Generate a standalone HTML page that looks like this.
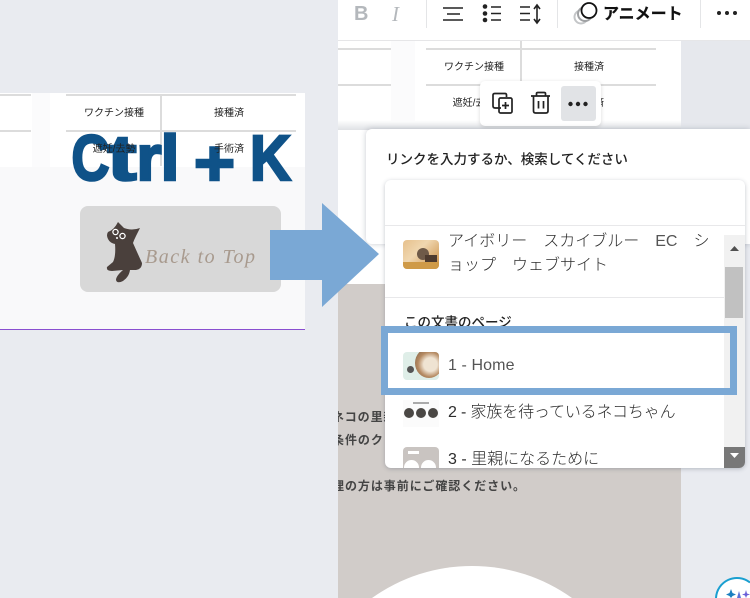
<!DOCTYPE html>
<html lang="ja">
<head>
<meta charset="utf-8">
<style>
html,body{margin:0;padding:0;width:750px;height:598px;overflow:hidden}
body{position:relative;background:#e9ebf0;font-family:"Liberation Sans","Noto Sans CJK JP",sans-serif;color:#222}
.a{position:absolute;white-space:nowrap}
.t{font-size:10px;line-height:14px;color:#222;transform:translateX(-50%)}
.l{background:#dcdcdc}
.dt{font-size:16px;line-height:24px;color:#2c2c2c;font-weight:300}
.p{font-size:12px;line-height:17px;font-weight:700;color:#444;letter-spacing:.95px}
</style>
</head>
<body>
<!-- left panel -->
<div class="a" style="left:0;top:93px;width:305px;height:236px;background:#f9f9fa"></div>
<div class="a" style="left:0;top:93px;width:305px;height:74px;background:#fff"></div>
<div class="a" style="left:32px;top:93px;width:18px;height:74px;background:#fbfbfc"></div>
<div class="a" style="left:0;top:329px;width:305px;height:1px;background:#8a4fd0"></div>
<div class="a l" style="left:0;top:94px;width:31px;height:2px"></div>
<div class="a l" style="left:0;top:130px;width:31px;height:2px"></div>
<div class="a l" style="left:66px;top:94px;width:230px;height:2px"></div>
<div class="a l" style="left:66px;top:130px;width:230px;height:2px"></div>
<div class="a l" style="left:160px;top:94px;width:2px;height:72px"></div>
<svg class="a" style="left:0;top:100px" width="305" height="95" viewBox="0 100 305 95" fill="#0f5288" stroke="#0f5288" stroke-width="2.500" font-family="Liberation Sans,sans-serif" font-weight="700" font-size="64">
  <text x="71.500" y="180" textLength="38" lengthAdjust="spacingAndGlyphs">C</text>
  <text x="107.500" y="180" textLength="29" lengthAdjust="spacingAndGlyphs">t</text>
  <text x="136.500" y="180" textLength="25" lengthAdjust="spacingAndGlyphs">r</text>
  <text x="160.500" y="180" textLength="19" lengthAdjust="spacingAndGlyphs">l</text>
  <text x="194" y="185" textLength="41" lengthAdjust="spacingAndGlyphs">+</text>
  <text x="250" y="180" textLength="41" lengthAdjust="spacingAndGlyphs">K</text>
</svg>
<div class="a t" style="left:114px;top:107px">ワクチン接種</div>
<div class="a t" style="left:229px;top:107px">接種済</div>
<div class="a t" style="left:114px;top:143px">遮妊/去勢</div>
<div class="a t" style="left:229px;top:143px">手術済</div>
<div class="a" style="left:80px;top:206px;width:201px;height:86px;background:#d8d8d8;border-radius:8px"></div>

<!-- right canvas -->
<div class="a" style="left:338px;top:0;width:412px;height:40px;background:#fff"></div>
<div class="a" style="left:338px;top:40px;width:412px;height:1px;background:#e6e6e8"></div>
<div class="a" style="left:338px;top:41px;width:343px;height:243px;background:#fff"></div>
<svg class="a" style="left:338px;top:284px" width="343" height="314" viewBox="338 284 343 314">
  <rect x="338" y="284" width="343" height="314" fill="#d1ccc9"/>
  <path d="M372 598A172 172 0 0 1 572 598Z" fill="#fff"/>
</svg>
<div class="a" style="left:338px;top:120px;width:343px;height:10px;background:linear-gradient(#fff0,#dfe1e5)"></div>
<div class="a" style="left:681px;top:41px;width:69px;height:88px;background:#e6e8ed"></div>
<div class="a" style="left:391px;top:41px;width:24px;height:80px;background:#fbfbfc"></div>
<div class="a l" style="left:338px;top:48px;width:53px;height:2px"></div>
<div class="a l" style="left:338px;top:84px;width:53px;height:2px"></div>
<div class="a l" style="left:426px;top:48px;width:230px;height:2px"></div>
<div class="a l" style="left:426px;top:84px;width:230px;height:2px"></div>
<div class="a l" style="left:520px;top:41px;width:2px;height:80px"></div>
<div class="a t" style="left:474px;top:61px">ワクチン接種</div>
<div class="a t" style="left:589px;top:61px">接種済</div>
<div class="a t" style="left:474px;top:97px">遮妊/去勢</div>
<div class="a t" style="left:589px;top:97px">手術済</div>

<!-- toolbar -->
<div class="a" style="left:354px;top:1px;font:bold 20px/26px 'Liberation Sans',sans-serif;color:#b4b8bc">B</div>
<div class="a" style="left:392px;top:1px;font:italic 21px/26px 'Liberation Serif',serif;color:#b4b8bc">I</div>
<div class="a" style="left:426px;top:0;width:1px;height:28px;background:#e4e5e7"></div>
<div class="a" style="left:557px;top:0;width:1px;height:28px;background:#e4e5e7"></div>
<div class="a" style="left:700px;top:0;width:1px;height:28px;background:#e4e5e7"></div>
<svg class="a" style="left:0;top:0" width="750" height="40" viewBox="0 0 750 40" fill="none" stroke="#222" stroke-width="1.600">
  <path d="M443 8H463M447 14H460M443 20H463"/>
  <circle cx="485" cy="6.500" r="2.300" fill="#222" stroke="none"/><circle cx="485" cy="13.500" r="2.300" fill="#222" stroke="none"/><circle cx="485" cy="20" r="2.300" fill="#222" stroke="none"/>
  <path d="M491 7H501M491 13.500H501M491 20H501"/>
  <path d="M520 7H530M520 13.500H530M520 20H530M537 6V22M534 9L537 5L540 9M534 19L537 23L540 19"/>
  <circle cx="581" cy="17" r="6.500" stroke="#c4c6c8" stroke-width="2"/>
  <circle cx="585" cy="14" r="7" stroke="#a0a2a4" stroke-width="2" fill="#fff"/>
  <circle cx="589" cy="10.500" r="7.500" stroke="#111" stroke-width="1.800" fill="#fff"/>
</svg>
<svg class="a" style="left:700px;top:0" width="50" height="40" viewBox="700 0 50 40">
  <circle cx="719" cy="13" r="2" fill="#222"/><circle cx="727" cy="13" r="2" fill="#222"/><circle cx="735" cy="13" r="2" fill="#222"/>
</svg>
<div class="a" style="left:603px;top:4px;font-size:16px;line-height:22px;font-weight:700;color:#111;-webkit-text-stroke:.2px #111">アニメート</div>

<!-- page text behind dialog -->
<div class="a p" style="left:332px;top:409px;clip-path:inset(0 0 0 6px)">ネコの里親</div>
<div class="a p" style="left:332px;top:432px;clip-path:inset(0 0 0 6px)">条件のク</div>
<div class="a p" style="left:332px;top:478px;clip-path:inset(0 0 0 6px)">理の方は事前にご確認ください。</div>

<!-- floating mini toolbar -->
<div class="a" style="left:480px;top:81px;width:121px;height:45px;background:#fff;border-radius:5px;box-shadow:0 1px 4px rgba(0,0,0,.15)"></div>
<div class="a" style="left:561px;top:86px;width:35px;height:35px;background:#e1e3e6;border-radius:3px"></div>
<svg class="a" style="left:480px;top:81px" width="121" height="45" viewBox="0 0 121 45" fill="none" stroke="#222" stroke-width="1.700">
  <path d="M21 27H15Q13 27 13 25V14Q13 12.500 15 12.500H25Q26.500 12.500 26.500 14V16"/>
  <rect x="19" y="17" width="13" height="15" rx="1.500"/>
  <path d="M25.500 21V28M22 24.500H29"/>
  <path d="M51 15H70M56.500 15V12.500Q56.500 11.500 58 11.500H64Q65.500 11.500 65.500 12.500V15M53.500 15V30Q53.500 32 55.500 32H66Q68 32 68 30V15M58.500 20V27.500M63.500 20V27.500"/>
  <circle cx="90.500" cy="23" r="2.200" fill="#222" stroke="none"/><circle cx="98" cy="23" r="2.200" fill="#222" stroke="none"/><circle cx="105.500" cy="23" r="2.200" fill="#222" stroke="none"/>
</svg>

<!-- assistant badge -->
<svg class="a" style="left:700px;top:565px" width="50" height="33" viewBox="0 0 50 33" fill="none">
  <path d="M16 33A21 21 0 0 1 50 17.500V33Z" fill="#fff"/>
  <path d="M16 33A21 21 0 0 1 50 17.500" stroke="#1a9fd0" stroke-width="2"/>
  <path d="M31 24L32.500 28L36 29.500L32.500 31L31 33L29.500 31L26 29.500L29.500 28Z" fill="#1a7fc0"/>
  <path d="M39 26L41 33H37Z" fill="#5a70d8"/>
  <path d="M46 25L47 28.500L50 29.500L47 30.500L46 33L45 30.500L42 29.500L45 28.500Z" fill="#6a5fd8"/>
</svg>

<!-- link dialog -->
<div class="a" style="left:366px;top:129px;width:384px;height:115px;background:#fff;border-radius:6px 0 0 6px;box-shadow:0 0 6px rgba(60,70,90,.28)"></div>
<div class="a" style="left:386px;top:151px;font-size:13.500px;line-height:18px;font-weight:500;color:#222">リンクを入力するか、検索してください</div>
<div class="a" style="left:385px;top:180px;width:360px;height:288px;background:#fff;border-radius:6px;box-shadow:0 1px 4px rgba(60,70,90,.3);overflow:hidden">
  <div class="a" style="left:0;top:45px;width:360px;height:1px;background:#e8e8ea"></div>
  <div class="a" style="left:0;top:117px;width:339px;height:1px;background:#e8e8ea"></div>
  <div class="a" style="left:339px;top:55px;width:21px;height:233px;background:#f1f1f1"></div>
  <div class="a" style="left:340px;top:87px;width:18px;height:51px;background:#c1c1c1"></div>
  <div class="a" style="left:339px;top:267px;width:21px;height:21px;background:#787878"></div>
  <svg class="a" style="left:339px;top:55px" width="21" height="233" viewBox="0 0 21 233">
    <path d="M6 16L10.500 11L15 16Z" fill="#505050"/>
    <path d="M6 218H15L10.500 223Z" fill="#fff"/>
  </svg>
  <div class="a" style="left:18px;top:60px;width:36px;height:29px;border-radius:4px;overflow:hidden;background:linear-gradient(135deg,#e6c08c 0%,#f0d7b0 40%,#c98a3f 100%)">
    <div class="a" style="left:14px;top:8px;width:12px;height:12px;border-radius:50%;background:#6f5a48"></div>
    <div class="a" style="left:22px;top:15px;width:12px;height:9px;background:#4d3a2e"></div>
    <div class="a" style="left:0;top:22px;width:36px;height:7px;background:#cf9a48"></div>
  </div>
  <div class="a dt" style="left:63px;top:50px">アイボリー　スカイブルー　<span style="color:#555">EC</span>　シ<br>ョップ　ウェブサイト</div>
  <div class="a" style="left:19px;top:134px;font-size:13.500px;line-height:18px;font-weight:500;color:#222">この文書のページ</div>

  <div class="a" style="left:18px;top:172px;width:36px;height:28px;border-radius:4px;overflow:hidden;background:#dfeee8">
    <div class="a" style="left:12px;top:-4px;width:28px;height:30px;border-radius:50%;background:radial-gradient(circle at 55% 55%,#efe3d2 0 30%,#b58a62 55%,#6f5540 100%)"></div>
    <div class="a" style="left:4px;top:14px;width:7px;height:7px;border-radius:50%;background:#555"></div>
  </div>
  <div class="a dt" style="left:63px;top:174px;letter-spacing:.1px;color:#555">1 - Home</div>

  <div class="a" style="left:18px;top:220px;width:36px;height:27px;background:#fbfbfb">
    <div class="a" style="left:10px;top:2px;width:16px;height:2px;background:#aaa"></div>
    <div class="a" style="left:1px;top:8px;width:10px;height:10px;border-radius:50%;background:#4a4744"></div>
    <div class="a" style="left:13px;top:8px;width:10px;height:10px;border-radius:50%;background:#4a4744"></div>
    <div class="a" style="left:25px;top:8px;width:10px;height:10px;border-radius:50%;background:#4a4744"></div>
  </div>
  <div class="a dt" style="left:63px;top:221px;letter-spacing:-.15px">2 - 家族を待っているネコちゃん</div>

  <div class="a" style="left:18px;top:267px;width:36px;height:21px;background:#c9c4c1;border-radius:4px 4px 0 0;overflow:hidden">
    <div class="a" style="left:5px;top:4px;width:11px;height:3px;background:#fff"></div>
    <div class="a" style="left:1px;top:13px;width:15px;height:8px;border-radius:8px 8px 0 0;background:#fff"></div>
    <div class="a" style="left:18px;top:13px;width:15px;height:8px;border-radius:8px 8px 0 0;background:#fff"></div>
  </div>
  <div class="a dt" style="left:63px;top:268px;height:20px;overflow:hidden">3 - 里親になるために</div>
</div>

<!-- highlight box -->
<div class="a" style="left:381px;top:326px;width:342px;height:55px;border:7px solid #7aa8d5"></div>

<!-- arrow, cat, script label -->
<svg class="a" style="left:0;top:0" width="750" height="598" viewBox="0 0 750 598">
  <path d="M270 230H322V203L379 254L322 307V280H270Z" fill="#7aa8d5"/>
  <path d="M118 222L124 228Q132 231 140 228L136 236Q134 240 133 243Q137 252 142 263Q142 269 136 270L130 270Q129 277 123 281Q117 284 116 280Q116 276 123 270L112 271Q106 271 107 267L113 262Q116 256 115 244Q110 243 108 239Q106 235 108 232Q114 230 118 222Z" fill="#4a403c"/>
  <circle cx="115.500" cy="232" r="2.600" fill="none" stroke="#fff" stroke-width="1.300"/>
  <circle cx="122.500" cy="236" r="2.600" fill="none" stroke="#fff" stroke-width="1.300"/>
  <circle cx="117" cy="238" r="1" fill="#fff"/>
  <text x="145" y="263" font-family="Liberation Serif,serif" font-style="italic" font-size="20" fill="#a89a8e" textLength="110">Back to Top</text>
</svg>
</body>
</html>
